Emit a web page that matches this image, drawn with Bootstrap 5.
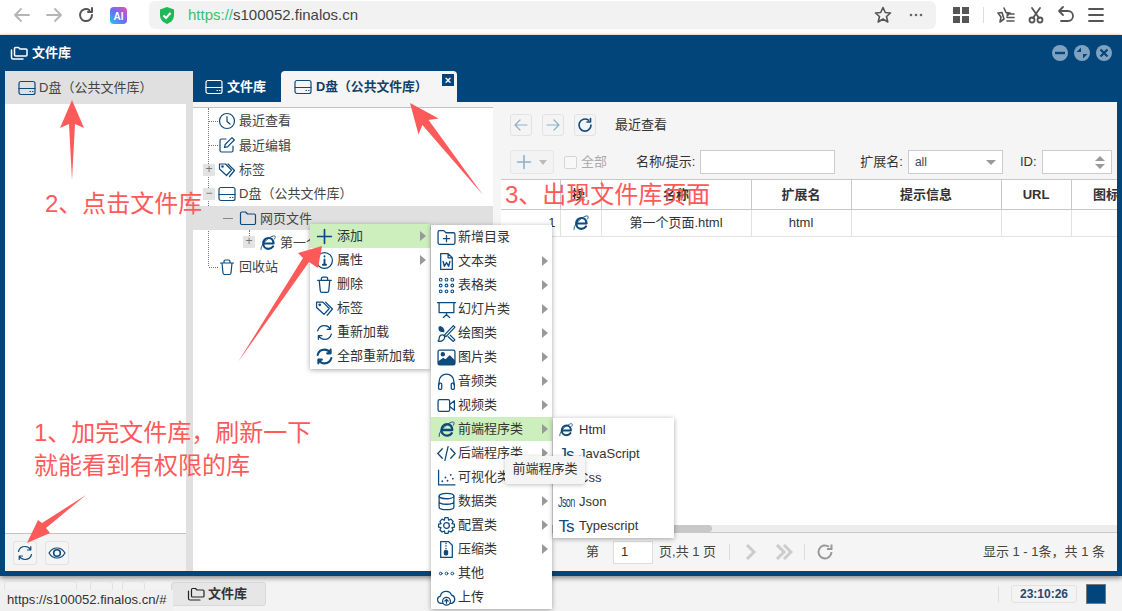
<!DOCTYPE html>
<html lang="zh"><head><meta charset="utf-8"><title>文件库</title>
<link href="https://cdn.jsdelivr.net/npm/bootstrap@5.3.0/dist/css/bootstrap.min.css" rel="stylesheet">
<style>
html,body{height:611px;overflow:hidden}
body{background:#f3f3f3;font:13px/1.2 "Liberation Sans","Noto Sans CJK SC",sans-serif;color:#333;position:relative}
.ic{width:18px;height:18px;flex:none;fill:none;stroke:#0d4a7e;stroke-width:1.2;stroke-linecap:round;stroke-linejoin:round}
.bbar{height:34px;background:#fff;flex:none}
.bic{width:20px;height:20px;flex:none;fill:none;stroke:#555;stroke-width:1.8;stroke-linecap:round;stroke-linejoin:round}
.bic.off{stroke:#b5b5b5}
.bnav{width:149px;flex:none;padding-left:12px;gap:12px}
.addr{width:787px;flex:none;height:28px;margin-top:1px;background:#f2f2f2;border-radius:6px;font-size:15px;padding:0 9px 0 9px;color:#444}
.gr{color:#3fbf6f}
.bright{gap:10px;padding-left:17px;flex:none}
.vsep{width:1px;height:16px;background:#ddd;flex:none}
.win{height:541px;margin-top:1px;background:#02457a;padding:0 5px 5px;box-shadow:0 2px 5px rgba(0,0,0,.45);flex:none}
.whead{height:36px;color:#fff;font-weight:700;padding-right:4px}
.whead .ic{stroke:#fff;stroke-width:1.5;margin:0 4px 0 5px}
.wbtn{width:18px;height:18px;margin-left:4px;flex:none}
.wbody{height:500px}
.lpanel{width:188px;background:#e0e0e0;flex:none}
.lhead{height:33px;padding-left:13px;color:#444;gap:3px}
.lmain{width:181px;background:#fff;flex:1}
.lfoot{width:181px;height:38px;background:#f3f3f3;border-top:1px solid #c2c2c2;padding-left:8px;gap:8px}
.sbtn{width:24px;height:24px;border:1px solid #e2e2e2;border-radius:3px;background:#f5f5f5}
.tabs{height:31px}
.tabx{height:31px;padding:0 12px;font-weight:700;color:#fff;gap:4px}
.tabx.act{width:176px;background:#f5f5f5;color:#123f66;border-radius:4px 4px 0 0;position:relative;padding-left:13px;font-size:12.8px}
.clo{position:absolute;right:3px;top:3px;width:12px;height:12px;background:#02457a;color:#fff;font:700 11px/12px "Liberation Sans",sans-serif;text-align:center}
.tbody{height:469px;background:#f5f5f5;padding-top:5px}
.tree{width:300px;background:#fff;border-top:1px solid #c2c2c2;padding-top:1px;flex:none;height:464px;color:#444}
.trow{height:24.3px;position:relative;gap:3px}
.trow.sel{background:#e0e0e0}
.pm{width:12px;height:12px;background:#e3e3e3;color:#777;font:12px/11px "Liberation Sans",sans-serif;text-align:center;position:absolute}
.lv0{padding-left:25px}.lv1{padding-left:46px}.lv2{padding-left:66px}
.dot{position:absolute;border-top:1px dotted #777}
.dotv{position:absolute;border-left:1px dotted #777}
.rp{margin-left:8px;flex:1;min-width:0;margin-top:-5px;display:flex;flex-direction:column}
.tool{height:77px;background:#f5f5f5;padding-left:9px}
.tr1{height:34px;padding-top:12px;gap:10px}
.tr2{margin-top:14px;height:24px}
.tbtn{width:22px;height:22px;border:1px solid #e2e2e2;border-radius:3px;background:#f4f4f4}
.addb{width:44px;height:24px;border:1px solid #e6e6e6;border-radius:3px;gap:6px;padding-left:4px;background:#f3f3f3}
.chk{width:13px;height:13px;border:1px solid #d5d5d5;background:#f8f8f8;margin-left:10px;border-radius:2px}
.fin{height:24px;background:#fff;border:1px solid #ccc;padding-left:6px;color:#444;font-size:12px;margin-left:5px}
.tblw{flex:1;background:#fff;overflow:hidden;min-height:0}
.gridt{width:640px;table-layout:fixed;margin:0;color:#333;border-collapse:collapse}
.gridt th{height:30px;padding:0;text-align:center;border:1px solid #c8c8c8;border-left:0;font-weight:700;vertical-align:middle;background:#fff;color:#333}
.gridt td{height:27px;padding:0;text-align:center;border:1px solid #e2e2e2;border-top:0;border-left:0;vertical-align:middle;color:#333}
.sbar{height:7px;background:#ececec}
.thumb{width:211px;height:7px;background:#c8c8c8;border-radius:0 4px 4px 0}
.pag{height:39px;background:#f5f5f5;border-top:1px solid #c8c8c8;padding-right:12px;color:#444}
.pin{width:40px;height:23px;border:1px solid #ddd;background:#fff;padding-left:7px;margin:0 6px 0 14px;font-size:13px;color:#333}
.sep2{width:1px;height:16px;background:#dcdcdc}
.stbar{flex:1;position:relative;padding-left:171px;padding-right:16px}
.tbb{width:95px;height:24px;border:1px solid #d8d8d8;border-radius:3px;background:#e6e6e6;font-weight:700;gap:3px;padding-left:15px;margin-top:1px;color:#333}
.clock{width:66px;height:18px;border:1px solid #e2e2e2;border-radius:3px;font:700 12px/16px "Liberation Sans",sans-serif;color:#1f4a72;text-align:center;margin:0 9px 0 12px}
.blq{width:20px;height:20px;background:#02457a;border:1px solid #777}
.ghost{height:24px;border:1px solid #e2e2e2;border-radius:3px}
.stip{position:absolute;left:0;bottom:0;width:173px;height:21px;background:#f0f0f0;padding-left:7px;line-height:20px;color:#333;font-size:13.1px;white-space:nowrap}
.cmenu{position:absolute;background:#fff;box-shadow:0 1px 5px rgba(0,0,0,.35);z-index:5}
.mi{height:24px;position:relative;padding-left:6px;gap:3px;color:#333;white-space:nowrap}
.mi.on{background:#cdeebd}
.mi .ic{width:19px;height:19px}
.m1 .mi{gap:3px;padding-left:5px}
.m2 .mi{gap:2px}
.m3 .mi{gap:5px;padding-left:5px}
.m3 .mi .ic{width:16px;height:16px}
.arr{position:absolute;right:4px;top:7px;width:0;height:0;border-left:6px solid #999;border-top:5px solid transparent;border-bottom:5px solid transparent}
.gly{width:16px;flex:none;color:#0d4a7e;font-weight:400;font-size:17px;line-height:17px;text-align:center;letter-spacing:-1px;white-space:nowrap}
.gly.nar{font-size:9px;letter-spacing:-.6px;transform:scaleY(1.7)}
.ttp{position:absolute;left:505px;top:456px;width:80px;height:28px;background:#f5f5f5;border-radius:3px;box-shadow:0 1px 4px rgba(0,0,0,.25);z-index:6;line-height:26px;text-align:center;color:#333;white-space:nowrap;font-size:13px}
.anno{position:absolute;color:#ff5a5a;font-size:24px;line-height:32.5px;z-index:7;white-space:nowrap;pointer-events:none}
.arrows{position:absolute;left:0;top:0;width:1122px;height:611px;z-index:8;pointer-events:none}
</style></head><body>
<svg width="0" height="0" class="position-absolute"><defs>
<symbol id="clock" viewBox="0 0 18 18"><circle cx="9" cy="9" r="7.5"/><path d="M9 4.5V9.5L12 12"/></symbol>
<symbol id="edit" viewBox="0 0 18 18"><path d="M8 3H3.5A1.5 1.5 0 0 0 2 4.500V14.500A1.500 1.500 0 0 0 3.500 16H13.500A1.500 1.500 0 0 0 15 14.500V10"/><path d="M6.500 11.500L7.200 8.500L14 1.700L16.300 4L9.500 10.800Z"/></symbol>
<symbol id="tag" viewBox="0 0 18 18"><path d="M1.500 3H7.500L13.500 9L8.500 14.500L1.500 8Z"/><path d="M10 3L16.500 9.500L11.500 15.500"/><circle cx="4.500" cy="5.500" r=".7"/></symbol>
<symbol id="hdd" viewBox="0 0 18 18"><rect x="1" y="2.500" width="16" height="13" rx="2"/><path d="M1 9.500H17M12 12.500H12.500M14.500 12.500H15"/></symbol>
<symbol id="folder" viewBox="0 0 18 18"><path d="M1.500 14V4.500A1.500 1.500 0 0 1 3 3H6.500L8.500 5H15A1.500 1.500 0 0 1 16.500 6.500V14A1.500 1.500 0 0 1 15 15.500H3A1.500 1.500 0 0 1 1.500 14Z"/></symbol>
<symbol id="folders" viewBox="0 0 18 18"><path d="M4.500 11V4.500A1 1 0 0 1 5.500 3.500H8.500L10 5H16A1 1 0 0 1 17 6V11A1 1 0 0 1 16 12H5.500A1 1 0 0 1 4.500 11Z"/><path d="M1.500 6V13.500A1.500 1.500 0 0 0 3 15H13"/></symbol>
<symbol id="ie" viewBox="0 0 18 18"><path stroke-width="2.200" d="M4.500 9.500H14.500C14.500 6 12.500 4 9.500 4C6.500 4 4.200 6.500 4.200 9.500C4.200 12.500 6.500 14.800 9.500 14.800C11.500 14.800 13 14 14 12.500"/><path stroke-width=".9" d="M2 15.500C1 12 8 4 14 2C16 1.500 17 2.500 15.500 5"/></symbol>
<symbol id="trash" viewBox="0 0 18 18"><path d="M2.500 5H15.500M6 5V3.500C6 2.500 6.700 2 7.500 2H10.500C11.300 2 12 2.500 12 3.500V5M4 5L5 15C5.100 15.800 5.700 16.500 6.500 16.500H11.500C12.300 16.500 12.900 15.800 13 15L14 5"/></symbol>
<symbol id="plus" viewBox="0 0 18 18"><path stroke-width="1.600" d="M9 2.500V15.500M2.500 9H15.500"/></symbol>
<symbol id="info" viewBox="0 0 18 18"><circle cx="9" cy="9" r="7.500"/><path stroke-width="1.800" d="M9 8V13M9 5V5.300M7.500 13H10.500"/></symbol>
<symbol id="sync" viewBox="0 0 18 18"><path d="M2.500 7.500C3.300 4.500 6 2.500 9 2.500C11.300 2.500 13.200 3.500 14.500 5.500M14.800 2.500V6H11.500M15.500 10.500C14.700 13.500 12 15.500 9 15.500C6.700 15.500 4.800 14.500 3.500 12.500M3.200 15.500V12H6.500"/></symbol>
<symbol id="syncb" viewBox="0 0 18 18"><path stroke-width="2" d="M2.500 7.500C3.300 4.500 6 2.500 9 2.500C11.300 2.500 13.200 3.500 14.500 5.500M14.800 2.500V6H11.500M15.500 10.500C14.700 13.500 12 15.500 9 15.500C6.700 15.500 4.800 14.500 3.500 12.500M3.200 15.500V12H6.500"/></symbol>
<symbol id="fplus" viewBox="0 0 18 18"><path d="M1 14V4A1.500 1.500 0 0 1 2.500 2.500H6.500L8.500 4.500H15.500A1.500 1.500 0 0 1 17 6V14A1.500 1.500 0 0 1 15.500 15.500H2.500A1.500 1.500 0 0 1 1 14Z"/><path d="M9 7V13M6 10H12"/></symbol>
<symbol id="word" viewBox="0 0 18 18"><path d="M3.500 1.500H10.500L14.500 5.500V16.500H3.500ZM10.500 1.500V5.500H14.500"/><path stroke-width="1.300" d="M5.800 9L7 13.500L9 10L11 13.500L12.200 9"/></symbol>
<symbol id="grid" viewBox="0 0 18 18"><g stroke-width="1"><circle cx="3.500" cy="3.500" r="1.300"/><circle cx="9" cy="3.500" r="1.300"/><circle cx="14.500" cy="3.500" r="1.300"/><circle cx="3.500" cy="9" r="1.300"/><circle cx="9" cy="9" r="1.300"/><circle cx="14.500" cy="9" r="1.300"/><circle cx="3.500" cy="14.500" r="1.300"/><circle cx="9" cy="14.500" r="1.300"/><circle cx="14.500" cy="14.500" r="1.300"/></g></symbol>
<symbol id="screen" viewBox="0 0 18 18"><path d="M.5 2.500H17.500M2 2.500V12H16V2.500M9 12V14M9 14L6 16.500M9 14L12 16.500"/></symbol>
<symbol id="paint" viewBox="0 0 18 18"><path fill="#0d4a7e" d="M3 2.500A2.500 2.500 0 1 0 6.500 6L5 3.500Z"/><path d="M15.500 1.500L7 10.500L8.500 12L17 3ZM2 14C2 11.500 4 9.500 6 10.500C8 11.500 7.500 14 5.500 15.500C4 16.500 2 16.500 1 16C2 15.500 2 15 2 14ZM6.500 7.500L2 3M10.500 12L15.500 16.500L17 15L12.500 10.500"/></symbol>
<symbol id="pic" viewBox="0 0 18 18"><rect x="1" y="2" width="16" height="14" rx="1.500"/><circle cx="5.500" cy="6" r="1.500" fill="#0d4a7e"/><path fill="#0d4a7e" d="M1.500 15.500V13L6 10L8 11.500L12 7.500L16.500 12V15.500Z"/></symbol>
<symbol id="head" viewBox="0 0 18 18"><path d="M2 12V9A7 7 0 0 1 16 9V12"/><rect x="1.500" y="10.500" width="3" height="6" rx="1"/><rect x="13.500" y="10.500" width="3" height="6" rx="1"/></symbol>
<symbol id="video" viewBox="0 0 18 18"><rect x="1" y="3.500" width="11" height="11" rx="1.500"/><path d="M12 8L16.500 4.500V13.500L12 10"/></symbol>
<symbol id="code" viewBox="0 0 18 18"><path d="M5 4.500L.8 9L5 13.500M13 4.500L17.200 9L13 13.500M10.500 2.500L7.500 15.500"/></symbol>
<symbol id="scat" viewBox="0 0 18 18"><path d="M1.500 2V16H17"/><path stroke-width="1.700" d="M5 12.500V12.600M8 9V9.100M10 12V12.100M13 6.500V6.600M15 10V10.100"/></symbol>
<symbol id="db" viewBox="0 0 18 18"><ellipse cx="9" cy="3.800" rx="7" ry="2.600"/><path d="M2 3.800V14.200C2 15.600 5 16.800 9 16.800C13 16.800 16 15.600 16 14.200V3.800M2 9C2 10.400 5 11.600 9 11.600C13 11.600 16 10.400 16 9"/></symbol>
<symbol id="cog" viewBox="0 0 18 18"><circle cx="9" cy="9" r="2.700"/><path d="M7.500 1.500H10.500L11 4L13.200 3L15.300 5.100L14.200 7.300L16.500 7.800V10.500L14.200 11L15.300 13.200L13.200 15.200L11 14.200L10.500 16.500H7.500L7 14.200L4.800 15.200L2.800 13.200L3.800 11L1.500 10.500V7.800L3.800 7.300L2.800 5.100L4.800 3L7 4Z"/></symbol>
<symbol id="zip" viewBox="0 0 18 18"><path d="M3.500 1.500H11L14.500 5V16.500H3.500Z"/><path stroke-width="1.300" d="M8.500 3V3.300M8.500 5.500V5.800M8.500 8V8.300"/><rect x="7" y="10" width="3" height="4" rx="1" fill="#0d4a7e"/></symbol>
<symbol id="more" viewBox="0 0 18 18"><g stroke-width=".9"><circle cx="3.500" cy="9" r="1.300"/><circle cx="9" cy="9" r="1.300"/><circle cx="14.500" cy="9" r="1.300"/></g></symbol>
<symbol id="cloud" viewBox="0 0 18 18"><path d="M4 14.500A3.500 3.500 0 0 1 3.200 7.600A5.500 5.500 0 0 1 13.800 6.800A4 4 0 0 1 14 14.500H12.500M5.500 14.500H4"/><circle cx="9" cy="12.500" r="3.700"/><path d="M9 14.500V10.800M7.500 12.300L9 10.800L10.500 12.300"/></symbol>
<symbol id="eye" viewBox="0 0 18 18"><path d="M1 9C3 5.500 6 4 9 4C12 4 15 5.500 17 9C15 12.500 12 14 9 14C6 14 3 12.500 1 9Z"/><circle cx="9" cy="9" r="3.300" stroke-width="1.600"/></symbol>
</defs></svg>

<div class="d-flex flex-column" style="height:611px">
<header class="bbar d-flex align-items-start">
  <div class="bnav d-flex align-items-center" style="height:30px">
    <svg class="bic off" viewBox="0 0 20 20"><path d="M17 10H3M9 4L3 10L9 16"/></svg>
    <svg class="bic off" viewBox="0 0 20 20"><path d="M3 10H17M11 4L17 10L11 16"/></svg>
    <svg class="bic" viewBox="0 0 20 20"><path stroke-width="2" d="M16 10A6 6 0 1 1 13.500 5.200M16 3V7H12"/></svg>
    <svg width="17" height="17" viewBox="0 0 17 17" style="margin-left:2px;flex:none"><defs><linearGradient id="ai" x1="0" y1="1" x2="1" y2="0"><stop offset="0" stop-color="#1fc8f0"/><stop offset=".5" stop-color="#6a6cf5"/><stop offset="1" stop-color="#f04fa0"/></linearGradient></defs><rect width="17" height="17" rx="4" fill="url(#ai)"/><text x="8.500" y="12.500" font-size="10" font-weight="700" fill="#fff" text-anchor="middle" font-family="Liberation Sans">AI</text></svg>
  </div>
  <div class="addr d-flex align-items-center">
    <svg width="18" height="19" viewBox="0 0 18 19" class="me-2"><path d="M9 1L16 3.500V9C16 13.500 13 16.500 9 18C5 16.500 2 13.500 2 9V3.500Z" fill="#21b85a"/><path d="M5.500 9.500L8 12L12.500 7" fill="none" stroke="#fff" stroke-width="2"/></svg>
    <span class="flex-grow-1 ms-1"><span class="gr">https://</span>s100052.finalos.cn</span>
    <svg class="bic" viewBox="0 0 20 20"><path stroke-width="1.600" d="M10 2.500L12.300 7.500L17.500 8L13.500 11.500L14.800 17L10 14L5.200 17L6.500 11.500L2.500 8L7.700 7.500Z"/></svg>
    <svg width="14" height="4" viewBox="0 0 14 4" class="ms-3 me-1"><circle cx="2" cy="2" r="1.300" fill="#666"/><circle cx="7" cy="2" r="1.300" fill="#666"/><circle cx="12" cy="2" r="1.300" fill="#666"/></svg>
  </div>
  <div class="bright d-flex align-items-center" style="height:30px">
    <svg width="16" height="16" viewBox="0 0 16 16" fill="#555" class="flex-none"><rect width="7" height="7"/><rect x="9" width="7" height="7"/><rect y="9" width="7" height="7"/><rect x="9" y="9" width="7" height="7"/></svg>
    <span class="vsep ms-1"></span>
    <svg class="bic" viewBox="0 0 20 20" style="margin-left:2px"><path stroke-width="1.600" d="M8 3L10 7.500L14 8L11 11M8 14L4 17L5 12L2 8L6 7.500ZM11 9H18M11 12.500H18M11 16H18"/></svg>
    <svg class="bic" viewBox="0 0 20 20"><circle cx="6" cy="15" r="2.500"/><circle cx="14" cy="15" r="2.500"/><path d="M7 13L14 3M13 13L6 3"/></svg>
    <svg class="bic" viewBox="0 0 20 20"><path d="M7 2L3 6L7 10M3 6H12A5 5 0 0 1 12 16H5"/></svg>
    <svg class="bic" viewBox="0 0 20 20"><path d="M3 4H17M3 10H17M3 16H17"/></svg>
  </div>
</header>

<section class="win d-flex flex-column">
  <div class="whead d-flex align-items-center">
    <svg class="ic"><use href="#folders"/></svg><span class="flex-grow-1">文件库</span>
    <svg class="wbtn" viewBox="0 0 18 18"><circle cx="9" cy="9" r="8" fill="#7ea2bf"/><rect x="4" y="7.800" width="10" height="2.400" fill="#02457a"/></svg>
    <svg class="wbtn" viewBox="0 0 18 18"><circle cx="9" cy="9" r="8" fill="#7ea2bf"/><path d="M3.500 8H8V3.500ZM14.500 10H10V14.500Z" fill="#02457a"/></svg>
    <svg class="wbtn" viewBox="0 0 18 18"><circle cx="9" cy="9" r="8" fill="#7ea2bf"/><path d="M5.500 5.500L12.500 12.500M12.500 5.500L5.500 12.500" stroke="#02457a" stroke-width="2.200"/></svg>
  </div>
  <div class="wbody d-flex">
    <aside class="lpanel d-flex flex-column">
      <div class="lhead d-flex align-items-center"><svg class="ic"><use href="#hdd"/></svg>D盘（公共文件库）</div>
      <div class="lmain"></div>
      <div class="lfoot d-flex align-items-center">
        <span class="sbtn d-flex align-items-center justify-content-center"><svg class="ic"><use href="#sync"/></svg></span>
        <span class="sbtn d-flex align-items-center justify-content-center"><svg class="ic"><use href="#eye"/></svg></span>
      </div>
    </aside>
    <div class="flex-grow-1 d-flex flex-column" style="min-width:0">
      <div class="tabs d-flex">
        <div class="tabx d-flex align-items-center" style="width:88px"><svg class="ic" style="stroke:#fff"><use href="#hdd"/></svg>文件库</div>
        <div class="tabx act d-flex align-items-center"><svg class="ic"><use href="#hdd"/></svg>D盘（公共文件库）<span class="clo">×</span></div>
      </div>
      <div class="tbody d-flex">
        <div class="tree position-relative">
          <span class="dotv" style="left:15px;top:0;height:158px"></span>
          <span class="dotv" style="left:36px;top:98px;height:24px"></span>
          <span class="dotv" style="left:56px;top:122px;height:18px"></span>
          <div class="trow lv0 d-flex align-items-center"><span class="dot" style="left:16px;width:9px;top:12px"></span><svg class="ic"><use href="#clock"/></svg>最近查看</div>
          <div class="trow lv0 d-flex align-items-center"><span class="dot" style="left:16px;width:9px;top:12px"></span><svg class="ic"><use href="#edit"/></svg>最近编辑</div>
          <div class="trow lv0 d-flex align-items-center"><span class="pm" style="left:10px;top:6px">+</span><svg class="ic"><use href="#tag"/></svg>标签</div>
          <div class="trow lv0 d-flex align-items-center"><span class="pm" style="left:10px;top:6px">−</span><svg class="ic"><use href="#hdd"/></svg>D盘（公共文件库）</div>
          <div class="trow sel lv1 d-flex align-items-center"><span class="dot" style="left:30px;width:10px;top:12px;border-top-style:solid;border-color:#888"></span><svg class="ic"><use href="#folder"/></svg>网页文件</div>
          <div class="trow lv2 d-flex align-items-center"><span class="pm" style="left:50px;top:6px">+</span><svg class="ic"><use href="#ie"/></svg>第一个页面.html</div>
          <div class="trow lv0 d-flex align-items-center"><span class="dot" style="left:16px;width:9px;top:12px"></span><svg class="ic"><use href="#trash"/></svg>回收站</div>
        </div>
        <div class="rp">
          <div class="tool">
            <div class="tr1 d-flex align-items-center">
              <span class="tbtn d-flex align-items-center justify-content-center"><svg class="ic" style="stroke:#8fb0cb"><path d="M15 9H3M8 4L3 9L8 14"/></svg></span>
              <span class="tbtn d-flex align-items-center justify-content-center"><svg class="ic" style="stroke:#8fb0cb"><path d="M3 9H15M10 4L15 9L10 14"/></svg></span>
              <span class="tbtn d-flex align-items-center justify-content-center"><svg class="ic" style="stroke-width:1.600"><path d="M15 9A6 6 0 1 1 12.500 4.200M14.500 2.500V6H11"/></svg></span>
              <span style="margin-left:9px;color:#333">最近查看</span>
            </div>
            <div class="tr2 d-flex align-items-center">
              <span class="addb d-flex align-items-center"><svg class="ic" style="stroke:#8fb0cb"><use href="#plus"/></svg><span style="width:0;height:0;border-left:4px solid transparent;border-right:4px solid transparent;border-top:5px solid #bbb"></span></span>
              <span class="chk"></span><span class="ms-1" style="color:#aaa">全部</span>
              <span style="margin-left:29px;color:#333">名称/提示:</span>
              <span class="fin" style="width:135px"></span>
              <span style="margin-left:25px;color:#333">扩展名:</span>
              <span class="fin d-flex align-items-center justify-content-between" style="width:95px;padding-right:6px">all<span style="width:0;height:0;border-left:5px solid transparent;border-right:5px solid transparent;border-top:5px solid #999"></span></span>
              <span style="margin-left:17px;color:#333">ID:</span>
              <span class="fin d-flex flex-column align-items-end justify-content-center" style="width:70px;padding-right:6px;gap:3px"><span style="width:0;height:0;border-left:5px solid transparent;border-right:5px solid transparent;border-bottom:5px solid #999"></span><span style="width:0;height:0;border-left:5px solid transparent;border-right:5px solid transparent;border-top:5px solid #999"></span></span>
            </div>
          </div>
          <div class="tblw">
            <table class="gridt">
              <colgroup><col style="width:59px"><col style="width:41px"><col style="width:150px"><col style="width:100px"><col style="width:150px"><col style="width:70px"><col style="width:70px"></colgroup>
              <thead><tr><th></th><th class="pe-1">操</th><th>名称</th><th>扩展名</th><th>提示信息</th><th>URL</th><th>图标</th></tr></thead>
              <tbody><tr><td class="text-end pe-1">1</td><td><svg class="ic"><use href="#ie"/></svg></td><td>第一个页面.html</td><td>html</td><td></td><td></td><td></td></tr></tbody>
            </table>
          </div>
          <div class="sbar"><div class="thumb"></div></div>
          <div class="pag d-flex align-items-center">
            <span style="margin-left:85px">第</span>
            <span class="pin d-flex align-items-center">1</span>
            <span>页,共 1 页</span>
            <span class="sep2" style="margin-left:13px"></span>
            <svg width="12" height="16" viewBox="0 0 12 16" style="margin-left:15px" fill="none" stroke="#ccc" stroke-width="3"><path d="M2 1L9 8L2 15"/></svg>
            <svg width="18" height="16" viewBox="0 0 18 16" style="margin-left:18px" fill="none" stroke="#ccc" stroke-width="3"><path d="M2 1L9 8L2 15M9 1L16 8L9 15"/></svg>
            <span class="sep2" style="margin-left:11px"></span>
            <svg width="18" height="18" viewBox="0 0 18 18" style="margin-left:11px" fill="none" stroke="#999" stroke-width="2"><path d="M15.500 9A6.500 6.500 0 1 1 13 3.800M15.500 1.500V6H11"/></svg>
            <span class="ms-auto">显示 1 - 1条，共 1 条</span>
          </div>
        </div>
      </div>
    </div>
  </div>
</section>

<footer class="stbar d-flex align-items-center">
  <span class="ghost position-absolute" style="left:4px;top:5px;width:73px"></span>
  <span class="ghost position-absolute" style="left:90px;top:5px;width:23px"></span>
  <span class="ghost position-absolute" style="left:122px;top:5px;width:23px"></span>
  <div class="tbb d-flex align-items-center"><svg class="ic" style="stroke:#222"><use href="#folders"/></svg>文件库</div>
  <span class="vsep ms-auto"></span>
  <span class="clock">23:10:26</span>
  <span class="blq"></span>
  <div class="stip">https://s100052.finalos.cn/#</div>
</footer>
</div>

<nav class="cmenu m1" style="left:310px;top:224px;width:120px;padding-bottom:1px">
  <div class="mi on d-flex align-items-center"><svg class="ic"><use href="#plus"/></svg>添加<i class="arr"></i></div>
  <div class="mi d-flex align-items-center"><svg class="ic"><use href="#info"/></svg>属性<i class="arr"></i></div>
  <div class="mi d-flex align-items-center"><svg class="ic"><use href="#trash"/></svg>删除</div>
  <div class="mi d-flex align-items-center"><svg class="ic"><use href="#tag"/></svg>标签</div>
  <div class="mi d-flex align-items-center"><svg class="ic"><use href="#sync"/></svg>重新加载</div>
  <div class="mi d-flex align-items-center"><svg class="ic"><use href="#syncb"/></svg>全部重新加载</div>
</nav>
<nav class="cmenu m2" style="left:431px;top:225px;width:121px">
  <div class="mi d-flex align-items-center"><svg class="ic"><use href="#fplus"/></svg>新增目录</div>
  <div class="mi d-flex align-items-center"><svg class="ic"><use href="#word"/></svg>文本类<i class="arr"></i></div>
  <div class="mi d-flex align-items-center"><svg class="ic"><use href="#grid"/></svg>表格类<i class="arr"></i></div>
  <div class="mi d-flex align-items-center"><svg class="ic"><use href="#screen"/></svg>幻灯片类<i class="arr"></i></div>
  <div class="mi d-flex align-items-center"><svg class="ic"><use href="#paint"/></svg>绘图类<i class="arr"></i></div>
  <div class="mi d-flex align-items-center"><svg class="ic"><use href="#pic"/></svg>图片类<i class="arr"></i></div>
  <div class="mi d-flex align-items-center"><svg class="ic"><use href="#head"/></svg>音频类<i class="arr"></i></div>
  <div class="mi d-flex align-items-center"><svg class="ic"><use href="#video"/></svg>视频类<i class="arr"></i></div>
  <div class="mi on d-flex align-items-center"><svg class="ic"><use href="#ie"/></svg>前端程序类<i class="arr"></i></div>
  <div class="mi d-flex align-items-center"><svg class="ic"><use href="#code"/></svg>后端程序类<i class="arr"></i></div>
  <div class="mi d-flex align-items-center"><svg class="ic"><use href="#scat"/></svg>可视化类<i class="arr"></i></div>
  <div class="mi d-flex align-items-center"><svg class="ic"><use href="#db"/></svg>数据类<i class="arr"></i></div>
  <div class="mi d-flex align-items-center"><svg class="ic"><use href="#cog"/></svg>配置类<i class="arr"></i></div>
  <div class="mi d-flex align-items-center"><svg class="ic"><use href="#zip"/></svg>压缩类<i class="arr"></i></div>
  <div class="mi d-flex align-items-center"><svg class="ic"><use href="#more"/></svg>其他</div>
  <div class="mi d-flex align-items-center"><svg class="ic"><use href="#cloud"/></svg>上传</div>
</nav>
<nav class="cmenu m3" style="left:553px;top:418px;width:121px">
  <div class="mi d-flex align-items-center"><svg class="ic"><use href="#ie"/></svg><span>Html</span></div>
  <div class="mi d-flex align-items-center"><span class="gly">Js</span><span>JavaScript</span></div>
  <div class="mi d-flex align-items-center"><span class="gly">Cs</span><span>Css</span></div>
  <div class="mi d-flex align-items-center"><span class="gly nar">Json</span><span>Json</span></div>
  <div class="mi d-flex align-items-center"><span class="gly">Ts</span><span>Typescript</span></div>
</nav>
<div class="ttp">前端程序类</div>

<div class="anno" style="left:45px;top:188px">2、点击文件库</div>
<div class="anno" style="left:505px;top:179px">3、出现文件库页面</div>
<div class="anno" style="left:34px;top:417px">1、加完文件库，刷新一下<br>就能看到有权限的库</div>
<svg class="arrows" viewBox="0 0 1122 611" fill="#ff5a5a">
  <polygon points="72,180 69,124 60,128 72,100 84,128 75,124"/>
  <polygon points="483,195 428.600,120 438.700,118.400 410,103 418.500,134.400 422.400,125"/>
  <polygon points="238,362 303,258 298,253 322,246 318,268 309,262"/>
  <polygon points="86,495 42,523 38,520 27,543 50,533 46,528"/>
</svg>
</body></html>
